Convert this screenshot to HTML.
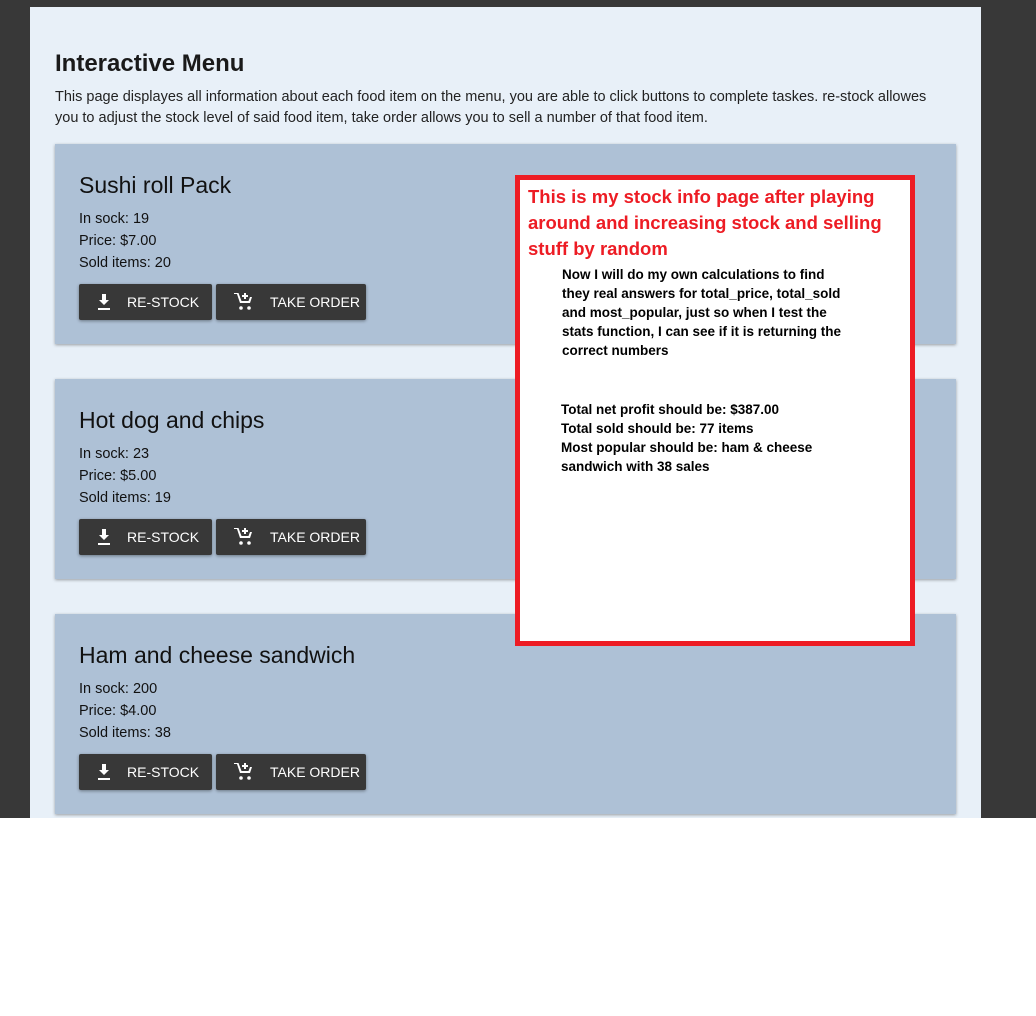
<!DOCTYPE html><html><head><style>
body{margin:0;width:1036px;height:1016px;background:#fff;position:relative;font-family:"Liberation Sans",sans-serif;overflow:hidden}
.dark{position:absolute;left:0;top:0;width:1036px;height:818px;background:#383838}
.panel{position:absolute;left:30px;top:7px;width:951px;height:811px;background:#e8f0f8;overflow:hidden}
h1{position:absolute;left:25px;top:43px;margin:0;font-size:24px;font-weight:bold;color:#1a1a1a}
.p{position:absolute;left:25px;top:80px;width:920px;font-size:14.5px;line-height:21px;color:#222;white-space:nowrap}
.card{position:absolute;left:25px;width:901px;height:200px;background:#aec1d6;box-shadow:0 1px 3px rgba(0,0,0,.35)}
.card h2{position:absolute;left:24px;top:28px;margin:0;font-weight:normal;font-size:23px;color:#111}
.info{position:absolute;left:24px;top:64px;font-size:14.5px;line-height:22px;color:#111}
.btn{position:absolute;top:140px;height:36px;background:#383838;color:#fff;font-size:14px;border-radius:2px;box-shadow:0 1px 3px rgba(0,0,0,.4);display:flex;align-items:center}
.btn svg{margin-left:18px;margin-right:16px}
.red{position:absolute;left:515px;top:175px;width:390px;height:461px;border:5px solid #ed1c24;background:#fff}
.rt{position:absolute;left:8px;top:4px;color:#ed1c24;font-weight:bold;font-size:18.5px;line-height:26px;white-space:nowrap}
.bt{position:absolute;left:42px;font-weight:bold;font-size:13.5px;line-height:19px;color:#000;white-space:nowrap}
</style></head><body>
<div class="dark"></div>
<div class="panel">
<h1>Interactive Menu</h1>
<div class="p">This page displayes all information about each food item on the menu, you are able to click buttons to complete taskes. re-stock allowes<br>you to adjust the stock level of said food item, take order allows you to sell a number of that food item.</div>
<div class="card" style="top:137px"><h2>Sushi roll Pack</h2><div class="info">In sock: 19<br>Price: $7.00<br>Sold items: 20</div>
<div class="btn" style="left:24px;width:133px"><svg width="14" height="16" viewBox="0 0 14 16"><path d="M5 0h4v6h3l-5 5-5-5h3z M1 14h12v2H1z" fill="#fff"/></svg>RE-STOCK</div>
<div class="btn" style="left:161px;width:150px"><svg width="20" height="18" viewBox="0 0 20 18"><path d="M0 1h3l3 9h10l2-6h-2l-1.5 4H7.5L4.5 0H0z M10 0h2v2h2v2h-2v2h-2V4H8V2h2z" fill="#fff"/><circle cx="7" cy="15" r="1.8" fill="#fff"/><circle cx="15" cy="15" r="1.8" fill="#fff"/></svg>TAKE ORDER</div></div>
<div class="card" style="top:372px"><h2>Hot dog and chips</h2><div class="info">In sock: 23<br>Price: $5.00<br>Sold items: 19</div>
<div class="btn" style="left:24px;width:133px"><svg width="14" height="16" viewBox="0 0 14 16"><path d="M5 0h4v6h3l-5 5-5-5h3z M1 14h12v2H1z" fill="#fff"/></svg>RE-STOCK</div>
<div class="btn" style="left:161px;width:150px"><svg width="20" height="18" viewBox="0 0 20 18"><path d="M0 1h3l3 9h10l2-6h-2l-1.5 4H7.5L4.5 0H0z M10 0h2v2h2v2h-2v2h-2V4H8V2h2z" fill="#fff"/><circle cx="7" cy="15" r="1.8" fill="#fff"/><circle cx="15" cy="15" r="1.8" fill="#fff"/></svg>TAKE ORDER</div></div>
<div class="card" style="top:607px"><h2>Ham and cheese sandwich</h2><div class="info">In sock: 200<br>Price: $4.00<br>Sold items: 38</div>
<div class="btn" style="left:24px;width:133px"><svg width="14" height="16" viewBox="0 0 14 16"><path d="M5 0h4v6h3l-5 5-5-5h3z M1 14h12v2H1z" fill="#fff"/></svg>RE-STOCK</div>
<div class="btn" style="left:161px;width:150px"><svg width="20" height="18" viewBox="0 0 20 18"><path d="M0 1h3l3 9h10l2-6h-2l-1.5 4H7.5L4.5 0H0z M10 0h2v2h2v2h-2v2h-2V4H8V2h2z" fill="#fff"/><circle cx="7" cy="15" r="1.8" fill="#fff"/><circle cx="15" cy="15" r="1.8" fill="#fff"/></svg>TAKE ORDER</div></div>
</div>
<div class="red">
<div class="rt">This is my stock info page after playing<br>around and increasing stock and selling<br>stuff by random</div>
<div class="bt" style="top:85px">Now I will do my own calculations to find<br>they real answers for total_price, total_sold<br>and most_popular, just so when I test the<br>stats function, I can see if it is returning the<br>correct numbers</div>
<div class="bt" style="top:220px;left:41px">Total net profit should be: $387.00<br>Total sold should be: 77 items<br>Most popular should be: ham &amp; cheese<br>sandwich with 38 sales</div>
</div>
</body></html>
